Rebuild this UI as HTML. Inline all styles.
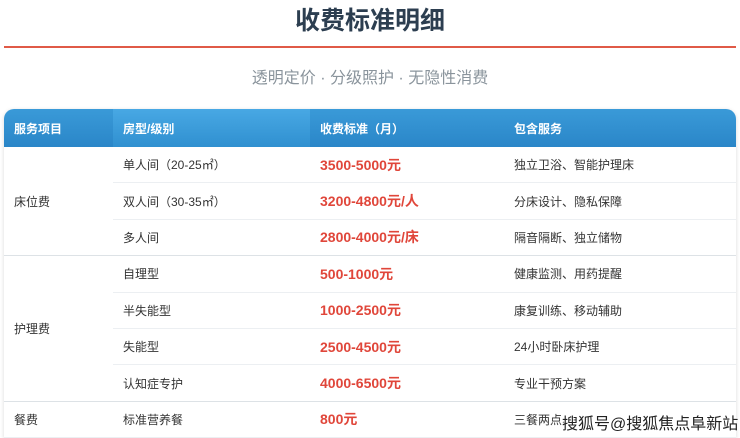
<!DOCTYPE html>
<html><head><meta charset="utf-8"><style>
body{margin:0;width:740px;height:438px;background:#fff;font-family:"Liberation Sans","Noto Sans CJK SC",sans-serif;overflow:hidden;position:relative}
h1{position:absolute;top:4px;left:0;width:740px;text-align:center;margin:0;font-size:25px;font-weight:bold;color:#2c3e50;line-height:34px}
.line{position:absolute;top:46px;left:4px;width:732px;height:2px;background:#e05a47}
.sub{position:absolute;top:64px;left:0;width:740px;text-align:center;font-size:16px;color:#8a949c}
table{position:absolute;top:109px;left:4px;width:732px;border-collapse:collapse;font-size:12px;color:#333;box-shadow:0 1px 4px rgba(0,0,0,.15);border-radius:10px 10px 0 0;overflow:hidden}
th{background:linear-gradient(#3a9ad8,#2a86c8);color:#fff;font-weight:bold;text-align:left;height:38px;padding:0 0 0 10px;font-size:12px}
th:nth-child(2){background:linear-gradient(#48a8e4,#3090d0)}
td{height:35.4px;padding:0 0 0 10px;border-bottom:1px solid #eceff2}
td.p{color:#e0463a;font-weight:bold;font-size:14px}
tr.g td{border-bottom:1px solid #dde2e6}
.wm{position:absolute;left:562px;top:410px;font-size:16px;color:#222;white-space:nowrap;text-shadow:0 0 2px #fff,0 0 2px #fff}
</style></head><body>
<h1>收费标准明细</h1><div class="line"></div>
<div class="sub">透明定价 · 分级照护 · 无隐性消费</div>
<table>
<colgroup><col style="width:109px"><col style="width:197px"><col style="width:194px"><col></colgroup>
<tr><th>服务项目</th><th>房型/级别</th><th>收费标准（月）</th><th>包含服务</th></tr>
<tr><td rowspan="3" style="border-bottom:1px solid #dde2e6">床位费</td><td>单人间（20-25㎡）</td><td class="p">3500-5000元</td><td>独立卫浴、智能护理床</td></tr>
<tr><td>双人间（30-35㎡）</td><td class="p">3200-4800元/人</td><td>分床设计、隐私保障</td></tr>
<tr class="g"><td>多人间</td><td class="p">2800-4000元/床</td><td>隔音隔断、独立储物</td></tr>
<tr><td rowspan="4" style="border-bottom:1px solid #dde2e6">护理费</td><td>自理型</td><td class="p">500-1000元</td><td>健康监测、用药提醒</td></tr>
<tr><td>半失能型</td><td class="p">1000-2500元</td><td>康复训练、移动辅助</td></tr>
<tr><td>失能型</td><td class="p">2500-4500元</td><td>24小时卧床护理</td></tr>
<tr class="g"><td>认知症专护</td><td class="p">4000-6500元</td><td>专业干预方案</td></tr>
<tr><td>餐费</td><td>标准营养餐</td><td class="p">800元</td><td>三餐两点、</td></tr>
</table>
<div class="wm">搜狐号@搜狐焦点阜新站</div>
</body></html>
